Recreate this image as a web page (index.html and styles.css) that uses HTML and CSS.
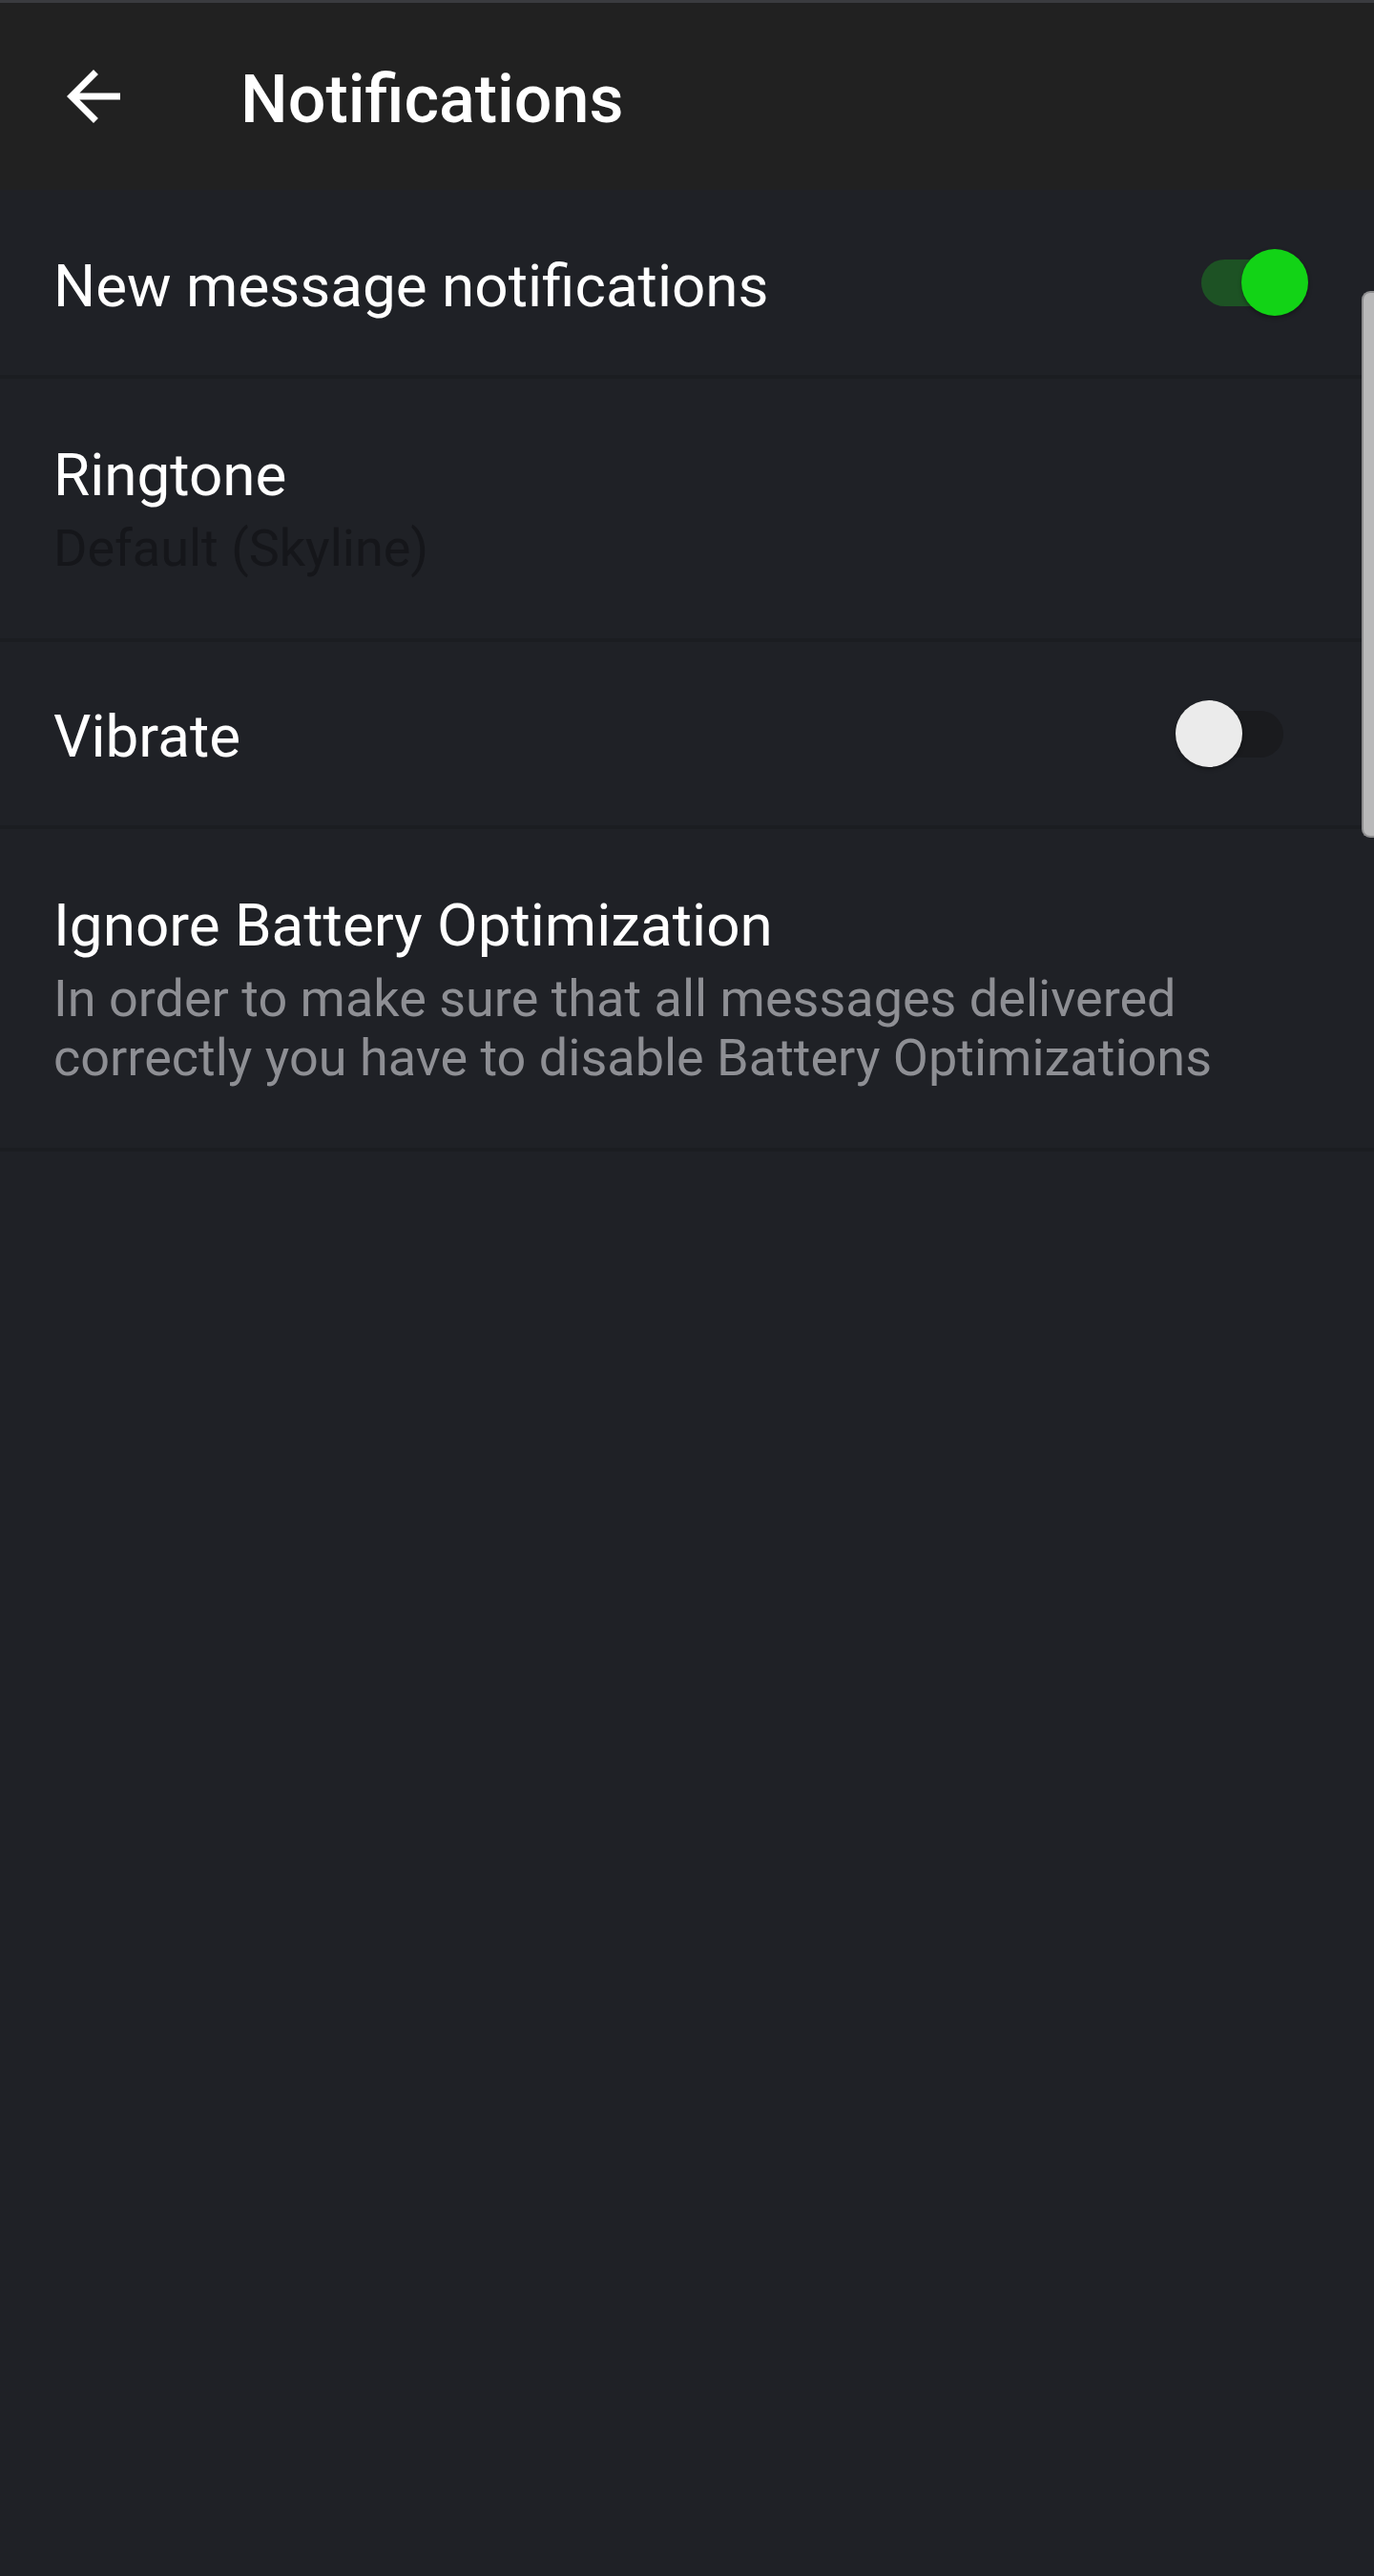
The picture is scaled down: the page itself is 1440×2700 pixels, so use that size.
FILE: index.html
```html
<!DOCTYPE html>
<html lang="en">
<head>
<meta charset="utf-8">
<title>Notifications</title>
<link rel="stylesheet" href="styles.css">
</head>
<body>
<div class="screen">
  <div class="topline"></div>
  <header class="toolbar">
    <svg class="back" viewBox="0 0 24 24" width="84" height="84" aria-hidden="true">
      <path d="M20 11H7.83l5.59-5.59L12 4l-8 8 8 8 1.41-1.41L7.83 13H20v-2z" fill="#ffffff"/>
    </svg>
    <h1 class="title">Notifications</h1>
  </header>

  <main class="prefs">
    <div class="pref">
      <div class="pref-text">
        <div class="pref-title">New message notifications</div>
      </div>
      <div class="switch switch-on">
        <span class="track"></span>
        <span class="thumb"></span>
      </div>
    </div>
    <div class="divider"></div>

    <div class="pref">
      <div class="pref-text pref-text-two">
        <div class="pref-title">Ringtone</div>
        <div class="pref-sub pref-sub-dark">Default (Skyline)</div>
      </div>
    </div>
    <div class="divider"></div>

    <div class="pref">
      <div class="pref-text pref-text-tight">
        <div class="pref-title">Vibrate</div>
      </div>
      <div class="switch switch-off">
        <span class="track"></span>
        <span class="thumb"></span>
      </div>
    </div>
    <div class="divider"></div>

    <div class="pref">
      <div class="pref-text pref-text-two">
        <div class="pref-title">Ignore Battery Optimization</div>
        <div class="pref-sub">In order to make sure that all messages delivered<br>correctly you have to disable Battery Optimizations</div>
      </div>
    </div>
    <div class="divider"></div>
  </main>

  <div class="scrollbar"></div>
</div>
</body>
</html>
```

FILE: styles.css
```css
html, body {
  margin: 0;
  padding: 0;
  background: #1f2126;
}

body {
  font-family: Roboto, "Noto Sans", "Liberation Sans", sans-serif;
  color: #ffffff;
}

.screen {
  position: relative;
  width: 1440px;
  min-height: 2700px;
  background: #1f2126;
}

.topline {
  height: 3px;
  background: #3a3b3f;
}

.toolbar {
  height: 196px;
  background: #212121;
  display: flex;
  align-items: center;
  padding-left: 56px;
}

.back {
  display: block;
  width: 84px;
  height: 84px;
  flex: none;
}

.title {
  margin: 0 0 0 112px;
  padding-top: 6px;
  font-size: 70px;
  font-weight: 500;
  line-height: 84px;
  color: #ffffff;
}

.prefs {
  display: flex;
  flex-direction: column;
}

.pref {
  display: flex;
  align-items: center;
  padding-left: 56px;
}

.pref-text {
  flex: 1;
  padding: 59px 0 51px;
}

.pref-text-tight {
  padding-top: 57px;
}

.pref-text-two {
  padding-bottom: 63px;
}

.pref-title {
  font-size: 62px;
  line-height: 84px;
  color: #ffffff;
  white-space: nowrap;
}

.pref-sub {
  margin-top: 4px;
  font-size: 54px;
  line-height: 62px;
  color: #8e8f94;
  white-space: nowrap;
}

.pref-sub-dark {
  color: #15161a;
}

.divider {
  height: 4px;
  background: #1b1d21;
}

.switch {
  position: relative;
  width: 113px;
  height: 70px;
  flex: none;
}

.switch-on {
  margin-right: 69px;
}

.switch-off {
  margin-right: 95px;
}

.track {
  position: absolute;
  top: 10.5px;
  width: 105px;
  height: 49px;
  border-radius: 25px;
}

.thumb {
  position: absolute;
  top: 0;
  width: 70px;
  height: 70px;
  border-radius: 50%;
  box-shadow: 0 2px 4px rgba(0, 0, 0, 0.35);
}

.switch-on .track {
  left: 1px;
  background: #1d5224;
}

.switch-on .thumb {
  right: 0;
  background: #12d316;
}

.switch-off .track {
  right: 0;
  background: #1a1b1e;
}

.switch-off .thumb {
  left: 0;
  background: #ebebeb;
}

.scrollbar {
  position: absolute;
  top: 305px;
  right: 0;
  width: 11px;
  height: 569px;
  background: #b9b9ba;
  border: 2px solid #8d8d8f;
  border-right: none;
  border-radius: 9px 0 0 9px;
}
```
